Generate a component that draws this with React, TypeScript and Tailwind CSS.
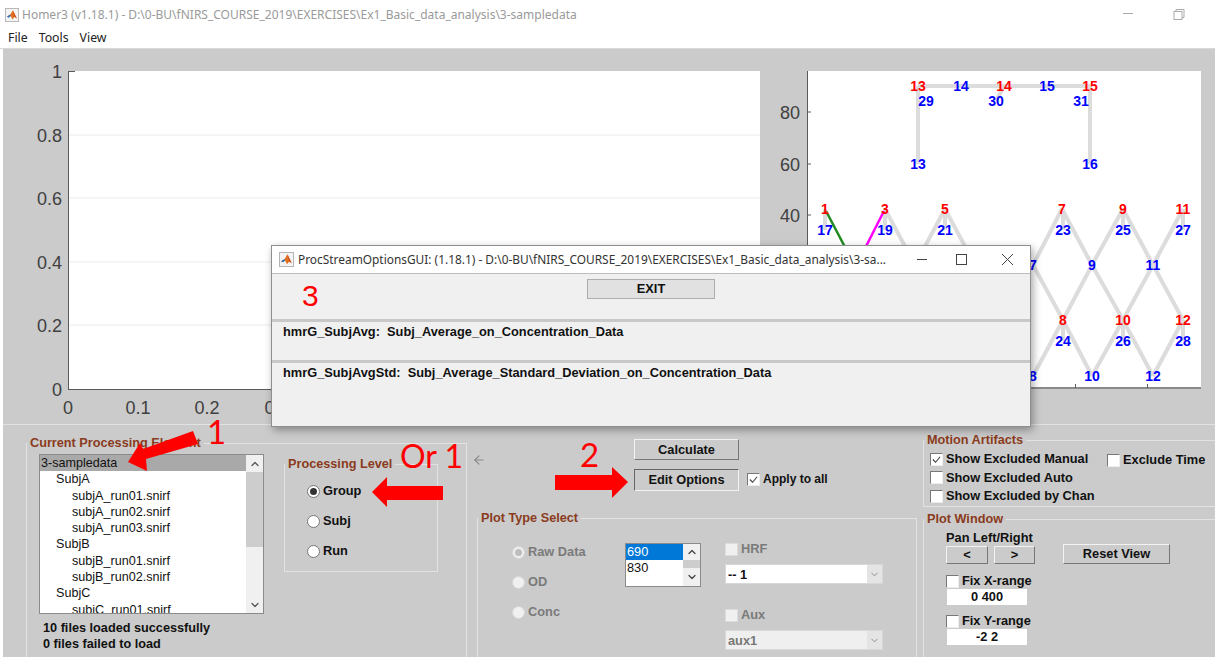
import { ArrowLeft, ChevronDown, ChevronUp } from "lucide-react";
import React from "react";

const arial = "font-['Liberation_Sans',Arial,sans-serif]";

function MatlabIcon({ className }: { className: string }) {
  return (
    <svg viewBox="0 0 16 16" className={className}>
      <rect x="0.5" y="0.5" width="15" height="15" fill="#f4f4f4" stroke="#b0b0b0" />
      <path d="M2 10 L6 7.5 L9 2.5 L13.5 12 L11 10 L8.5 13 L6.5 9 Z" fill="#e2701f" />
      <path d="M2 10 L6 7.5 L6.5 9 L4.5 11 Z" fill="#2d6fb5" />
      <path d="M9 2.5 L13.5 12 L11 10 Z" fill="#c9401a" />
    </svg>
  );
}

function Radio({ on, dim, label }: { on?: boolean; dim?: boolean; label: string }) {
  return (
    <div className={`flex h-[16px] items-center gap-[3px] text-[12.8px] font-bold ${dim ? "text-[#7a7a7a]" : "text-[#111]"}`}>
      <span className={`flex h-[13px] w-[13px] items-center justify-center rounded-full border ${dim ? "border-[#d8d8d8] bg-[#f0f0f0]" : "border-[#777] bg-white"}`}>
        {on && <span className={`h-[7px] w-[7px] rounded-full ${dim ? "bg-[#bdbdbd]" : "bg-[#333]"}`} />}
      </span>
      {label}
    </div>
  );
}

function Check({ on, dim, label, small }: { on?: boolean; dim?: boolean; label: string; small?: boolean }) {
  return (
    <div className={`flex h-[16px] items-center gap-[3px] font-bold whitespace-nowrap ${small ? "text-[12px]" : "text-[12.8px]"} ${dim ? "text-[#7a7a7a]" : "text-[#111]"}`}>
      <span className={`flex h-[13px] w-[13px] shrink-0 items-center justify-center border ${dim ? "border-[#dcdcdc] bg-[#f0f0f0]" : "border-t-[#777] border-l-[#777] border-r-[#eee] border-b-[#eee] bg-white"}`}>
        {on && (
          <svg viewBox="0 0 12 12" className="h-[11px] w-[11px]">
            <path d="M2 6 L5 9 L10 3" fill="none" stroke="#444" strokeWidth="1.2" />
          </svg>
        )}
      </span>
      {label}
    </div>
  );
}

function Group({ title, className, children }: { title: string; className: string; children?: React.ReactNode }) {
  return (
    <fieldset className={`min-w-0 border border-[#e2e2e2] ${className}`}>
      <legend className="px-[3px] text-[12.7px] leading-[14px] font-bold whitespace-nowrap text-[#8a3b20]">{title}</legend>
      {children}
    </fieldset>
  );
}

function Btn({ label, className, pressed }: { label: string; className: string; pressed?: boolean }) {
  return (
    <div
      className={`flex items-center justify-center border text-[12.8px] font-bold text-[#111] ${
        pressed
          ? "border-t-[#666] border-l-[#666] border-r-[#f2f2f2] border-b-[#f2f2f2]"
          : "border-t-[#f2f2f2] border-l-[#f2f2f2] border-r-[#777] border-b-[#777]"
      } ${className}`}
    >
      {label}
    </div>
  );
}

function Select({ label, dim }: { label: string; dim?: boolean }) {
  return (
    <div className={`flex h-[20px] w-[158px] border border-[#d8d8d8] text-[12.8px] font-bold ${dim ? "bg-[#efefef] text-[#777]" : "bg-white text-[#111]"}`}>
      <span className="flex-1 pl-[2px] leading-[19px]">{label}</span>
      <span className="flex w-[15px] items-center justify-center bg-[#e4e4e4] text-[#888]">
        <ChevronDown size={11} />
      </span>
    </div>
  );
}

function TreeRow({ text, indent, sel }: { text: string; indent: string; sel?: boolean }) {
  return <div className={`h-[16.3px] whitespace-nowrap text-[12.6px] leading-[16px] text-[#111] ${indent} ${sel ? "bg-[#a9a9a9]" : ""}`}>{text}</div>;
}

function LeftPlot() {
  const ys: [string, number][] = [["1", 71], ["0.8", 135], ["0.6", 198], ["0.4", 262], ["0.2", 325], ["0", 389]];
  const xs: [string, number][] = [["0", 68], ["0.1", 138], ["0.2", 207], ["0.3", 277]];
  return (
    <svg viewBox="3 49 757 376" className="h-[376px] w-[757px] shrink-0" fontFamily="'Liberation Sans',Arial,sans-serif" fontSize="18" fill="#404040">
      <rect x="68" y="71" width="692" height="319" fill="white" />
      {ys.slice(1, 5).map(([, y]) => (
        <line key={y} x1="68" x2="760" y1={y} y2={y} stroke="#ececec" />
      ))}
      <line x1="68.5" x2="68.5" y1="71" y2="390" stroke="#5a5a5a" />
      <line x1="68" x2="760" y1="389.5" y2="389.5" stroke="#5a5a5a" />
      <line x1="68" x2="75" y1="71.5" y2="71.5" stroke="#5a5a5a" />
      {ys.map(([t, y]) => (
        <text key={t} x="62" y={y + 6.5} textAnchor="end">{t}</text>
      ))}
      {xs.map(([t, x]) => (
        <text key={t} x={x} y="414" textAnchor="middle">{t}</text>
      ))}
    </svg>
  );
}

function Probe() {
  const gray: [number, number, number, number][] = [
    [918, 86, 1090, 86], [918, 86, 918, 164], [1090, 86, 1090, 164], [1004, 86, 996, 101],
    [825, 209, 825, 230], [885, 209, 885, 230], [945, 209, 945, 230], [1063, 209, 1063, 230], [1123, 209, 1123, 230], [1183, 209, 1183, 230],
    [885, 209, 915, 265], [945, 209, 915, 265], [945, 209, 975, 265],
    [1062, 209, 1033, 265], [1062, 209, 1092, 265], [1123, 209, 1092, 265], [1123, 209, 1153, 265], [1183, 209, 1153, 265],
    [1033, 265, 1063, 320], [1092, 265, 1063, 320], [1092, 265, 1123, 320], [1153, 265, 1123, 320], [1153, 265, 1183, 320],
    [1063, 320, 1063, 341], [1123, 320, 1123, 341], [1183, 320, 1183, 341],
    [1063, 320, 1033, 376], [1063, 320, 1092, 376], [1123, 320, 1092, 376], [1123, 320, 1153, 376], [1183, 320, 1153, 376],
  ];
  const red: [string, number, number][] = [
    ["13", 918, 86], ["14", 1004, 86], ["15", 1090, 86], ["1", 825, 209], ["3", 885, 209], ["5", 945, 209], ["7", 1062, 209], ["9", 1123, 209], ["11", 1183, 209],
    ["8", 1063, 320], ["10", 1123, 320], ["12", 1183, 320],
  ];
  const blue: [string, number, number][] = [
    ["14", 961, 86], ["15", 1047, 86], ["29", 926, 101], ["30", 996, 101], ["31", 1081, 101], ["13", 918, 164], ["16", 1090, 164],
    ["17", 825, 230], ["19", 885, 230], ["21", 945, 230], ["23", 1063, 230], ["25", 1123, 230], ["27", 1183, 230],
    ["7", 1033, 265], ["9", 1092, 265], ["11", 1153, 265], ["24", 1063, 341], ["26", 1123, 341], ["28", 1183, 341],
    ["8", 1033, 376], ["10", 1092, 376], ["12", 1153, 376],
  ];
  return (
    <svg viewBox="760 49 455 376" className="h-[376px] w-[455px] shrink-0" fontFamily="'Liberation Sans',Arial,sans-serif">
      <rect x="807" y="71" width="394" height="317" fill="white" />
      <line x1="807.5" x2="807.5" y1="71" y2="388" stroke="#5a5a5a" />
      <line x1="807" x2="1201" y1="388" y2="388" stroke="#8a8a8a" strokeWidth="2" />
      {[[80, 112], [60, 164], [40, 215]].map(([t, y]) => (
        <g key={t}>
          <line x1="807" x2="811" y1={y} y2={y} stroke="#5a5a5a" />
          <text x="800" y={y + 6.5} textAnchor="end" fontSize="18" fill="#404040">{t}</text>
        </g>
      ))}
      <line x1="1075.5" x2="1075.5" y1="384" y2="388" stroke="#5a5a5a" />
      <line x1="1147.5" x2="1147.5" y1="384" y2="388" stroke="#5a5a5a" />
      {gray.map(([a, b, c, d], i) => (
        <line key={i} x1={a} y1={b} x2={c} y2={d} stroke="#dcdcdc" strokeWidth="4" />
      ))}
      <line x1="826" y1="211" x2="856" y2="268" stroke="#228b22" strokeWidth="2.5" />
      <line x1="884" y1="211" x2="855" y2="268" stroke="#ff00ff" strokeWidth="2.5" />
      <g fontSize="14" fontWeight="bold" textAnchor="middle">
        {red.map(([t, x, y]) => (
          <text key={`r${t}`} x={x} y={y + 5} fill="#ff0000">{t}</text>
        ))}
        {blue.map(([t, x, y], i) => (
          <text key={`b${i}`} x={x} y={y + 5} fill="#0000ff">{t}</text>
        ))}
      </g>
    </svg>
  );
}

function Dialog() {
  return (
    <div className={`absolute top-[245px] left-[271px] flex h-[182px] w-[760px] flex-col border border-[#8f8f8f] bg-[#f0f0f0] shadow-[2px_3px_8px_rgba(0,0,0,0.35)] ${arial}`}>
      <div className="flex h-[28px] shrink-0 items-center border-b border-[#bdbdbd] bg-white pl-[7px] font-['Noto_Sans',sans-serif] text-[11.9px] text-[#333]">
        <MatlabIcon className="h-[15px] w-[15px]" />
        <span className="ml-[4px] whitespace-nowrap">ProcStreamOptionsGUI: (1.18.1) - D:\0-BU\fNIRS_COURSE_2019\EXERCISES\Ex1_Basic_data_analysis\3-sa...</span>
        <svg viewBox="0 0 96 14" className="mr-[17px] ml-auto h-[14px] w-[96px] shrink-0">
          <line x1="0" x2="10" y1="6.5" y2="6.5" stroke="#444" />
          <rect x="39.5" y="1.5" width="10" height="10" fill="none" stroke="#444" />
          <path d="M85 1 L96 12 M96 1 L85 12" stroke="#444" />
        </svg>
      </div>
      <div className="relative h-[48px] shrink-0 border-b-[3px] border-[#c8c8c8]">
        <div className="absolute top-[5px] left-[315px] flex h-[20px] w-[128px] items-center justify-center border border-[#adadad] bg-[#e1e1e1] text-[12.8px] font-bold text-[#111]">EXIT</div>
        <span className="absolute top-[4px] left-[30px] text-[30px] leading-[36px] text-[#ff0000]">3</span>
      </div>
      <div className="h-[41px] shrink-0 border-b-[3px] border-[#c8c8c8] pt-[1px] pl-[11px] text-[12.8px] leading-[18px] font-bold whitespace-pre text-[#111]">hmrG_SubjAvg:  Subj_Average_on_Concentration_Data</div>
      <div className="pt-[1px] pl-[11px] text-[12.8px] leading-[18px] font-bold whitespace-pre text-[#111]">hmrG_SubjAvgStd:  Subj_Average_Standard_Deviation_on_Concentration_Data</div>
    </div>
  );
}

function Annotations() {
  return (
    <>
      <svg viewBox="0 0 1215 657" className="pointer-events-none absolute inset-0 h-[657px] w-[1215px]">
        <polygon points="198,444 146,459 147,471 128,462 140,443 143,449 193,431" fill="#ff0000" />
        <polygon points="372,492 387,477 387,486 443,486 443,500 387,500 387,507" fill="#ff0000" />
        <polygon points="555,475 612,475 612,467 628,482 612,498 612,490 555,490" fill="#ff0000" />
      </svg>
      <span className="absolute top-[413px] left-[207px] font-['Lato',sans-serif] text-[33px] leading-[36px] text-[#ff0000]">1</span>
      <span className="absolute top-[438px] left-[400px] font-['Lato',sans-serif] text-[32px] leading-[36px] text-[#ff0000]">Or 1</span>
      <span className="absolute top-[436px] left-[580px] font-['Lato',sans-serif] text-[33px] leading-[36px] text-[#ff0000]">2</span>
    </>
  );
}

export default function App() {
  return (
    <div className={`relative flex h-[657px] w-[1215px] flex-col overflow-hidden bg-white ${arial}`}>
      <div className="flex h-[29px] shrink-0 items-center pl-[5px] font-['Noto_Sans',sans-serif] text-[12px] text-[#9a9a9a]">
        <MatlabIcon className="h-[14px] w-[14px]" />
        <span className="ml-[3px] whitespace-nowrap">Homer3 (v1.18.1) - D:\0-BU\fNIRS_COURSE_2019\EXERCISES\Ex1_Basic_data_analysis\3-sampledata</span>
        <svg viewBox="0 0 64 14" className="mr-[28px] ml-auto h-[14px] w-[64px] text-[#aaa]">
          <line x1="0" x2="10" y1="5.5" y2="5.5" stroke="currentColor" />
          <rect x="51" y="3.5" width="8" height="8" fill="none" stroke="currentColor" />
          <path d="M53 3.5 V1.5 H61 V9.5 H59" fill="none" stroke="currentColor" />
        </svg>
      </div>
      <div className="flex h-[20px] shrink-0 items-center gap-[11px] border-b border-[#d8d8d8] pl-[8px] font-['Noto_Sans',sans-serif] text-[12.3px] text-[#222]">
        <span>File</span>
        <span>Tools</span>
        <span>View</span>
      </div>
      <div className="ml-[3px] flex-1 overflow-hidden bg-[#cbcbcb]">
        <div className="flex h-[376px] border-b border-[#e2e2e2]">
          <LeftPlot />
          <Probe />
        </div>
        <div className="flex items-start pt-[11px] pl-[23px]">
          <Group title="Current Processing Element" className="h-[230px] w-[441px] shrink-0">
            <div className="flex items-start pt-[4px] pl-[12px]">
              <div>
                <div className="flex h-[160px] w-[225px] border border-[#8b8b8b] bg-white">
                  <div className="min-w-0 flex-1 overflow-hidden">
                    <TreeRow text="3-sampledata" indent="pl-[1px]" sel />
                    <TreeRow text="SubjA" indent="pl-[16px]" />
                    <TreeRow text="subjA_run01.snirf" indent="pl-[32px]" />
                    <TreeRow text="subjA_run02.snirf" indent="pl-[32px]" />
                    <TreeRow text="subjA_run03.snirf" indent="pl-[32px]" />
                    <TreeRow text="SubjB" indent="pl-[16px]" />
                    <TreeRow text="subjB_run01.snirf" indent="pl-[32px]" />
                    <TreeRow text="subjB_run02.snirf" indent="pl-[32px]" />
                    <TreeRow text="SubjC" indent="pl-[16px]" />
                    <TreeRow text="subjC_run01.snirf" indent="pl-[32px]" />
                  </div>
                  <div className="flex w-[17px] flex-col bg-[#f0f0f0] text-[#555]">
                    <div className="flex h-[17px] items-center justify-center"><ChevronUp size={12} strokeWidth={2.5} /></div>
                    <div className="h-[75px] bg-[#cdcdcd]" />
                    <div className="flex-1" />
                    <div className="flex h-[17px] items-center justify-center"><ChevronDown size={12} strokeWidth={2.5} /></div>
                  </div>
                </div>
                <div className="mt-[7px] pl-[4px] text-[12.7px] leading-[15.5px] font-bold text-[#111]">
                  <div>10 files loaded successfully</div>
                  <div>0 files failed to load</div>
                </div>
              </div>
              <Group title="Processing Level" className="mt-[3px] ml-[20px] h-[115px] w-[154px]">
                <div className="flex flex-col gap-[14px] pt-[12px] pl-[22px]">
                  <Radio on label="Group" />
                  <Radio label="Subj" />
                  <Radio label="Run" />
                </div>
              </Group>
            </div>
          </Group>
          <div className="ml-[10px] w-[440px] shrink-0">
            <div className="flex h-[75px] items-start">
              <ArrowLeft size={14} className="mt-[17px] ml-[-5px] shrink-0 text-[#8a8a8a]" />
              <div className="ml-[148px] flex flex-col gap-[9px] pt-[3px]">
                <Btn label="Calculate" className="h-[21px] w-[105px]" />
                <Btn label="Edit Options" pressed className="h-[22px] w-[105px]" />
              </div>
              <div className="mt-[35px] ml-[8px]"><Check small on label="Apply to all" /></div>
            </div>
            <Group title="Plot Type Select" className="h-[150px] w-[440px]">
              <div className="flex items-start pt-[16px] pl-[34px]">
                <div className="flex w-[80px] flex-col gap-[14px] pt-[3px]">
                  <Radio on dim label="Raw Data" />
                  <Radio dim label="OD" />
                  <Radio dim label="Conc" />
                </div>
                <div className="mt-[2px] ml-[33px] flex h-[44px] w-[76px] border border-[#8b8b8b] bg-white text-[12.8px] leading-[16px] text-[#111]">
                  <div className="flex-1">
                    <div className="bg-[#0078d7] pl-[1px] text-white">690</div>
                    <div className="pl-[1px]">830</div>
                  </div>
                  <div className="flex w-[17px] flex-col bg-[#f0f0f0] text-[#444]">
                    <div className="flex h-[16px] items-center justify-center"><ChevronUp size={12} strokeWidth={2.5} /></div>
                    <div className="h-[8px] bg-[#cdcdcd]" />
                    <div className="flex flex-1 items-center justify-center"><ChevronDown size={12} strokeWidth={2.5} /></div>
                  </div>
                </div>
                <div className="ml-[24px] flex flex-col">
                  <Check dim label="HRF" />
                  <div className="mt-[7px]"><Select label="-- 1" /></div>
                  <div className="mt-[23px]"><Check dim label="Aux" /></div>
                  <div className="mt-[7px]"><Select dim label="aux1" /></div>
                </div>
              </div>
            </Group>
          </div>
          <div className="mt-[-3px] ml-[6px] flex-1">
            <Group title="Motion Artifacts" className="h-[74px] w-[300px]">
              <div className="flex items-start pt-[4px] pl-[6px]">
                <div className="flex w-[158px] flex-col gap-[2.5px]">
                  <Check on label="Show Excluded Manual" />
                  <Check label="Show Excluded Auto" />
                  <Check label="Show Excluded by Chan" />
                </div>
                <div className="mt-[1px] ml-[19px]"><Check label="Exclude Time" /></div>
              </div>
            </Group>
            <Group title="Plot Window" className="mt-[5px] h-[150px] w-[300px]">
              <div className="pt-[4px] pl-[22px]">
                <div className="text-[12.8px] leading-[15px] font-bold text-[#111]">Pan Left/Right</div>
                <div className="mt-[1px] flex items-start">
                  <Btn label="<" className="h-[18px] w-[42px]" />
                  <Btn label=">" className="ml-[6px] h-[18px] w-[41px]" />
                  <Btn label="Reset View" className="mt-[-2px] ml-[28px] h-[20px] w-[107px]" />
                </div>
                <div className="mt-[9px]"><Check label="Fix X-range" /></div>
                <div className="ml-[1px] flex h-[16px] w-[80px] items-center justify-center bg-white text-[12.8px] font-bold text-[#111]">0 400</div>
                <div className="mt-[8px]"><Check label="Fix Y-range" /></div>
                <div className="ml-[1px] flex h-[16px] w-[80px] items-center justify-center bg-white text-[12.8px] font-bold text-[#111]">-2 2</div>
              </div>
            </Group>
          </div>
        </div>
      </div>
      <Dialog />
      <Annotations />
    </div>
  );
}
